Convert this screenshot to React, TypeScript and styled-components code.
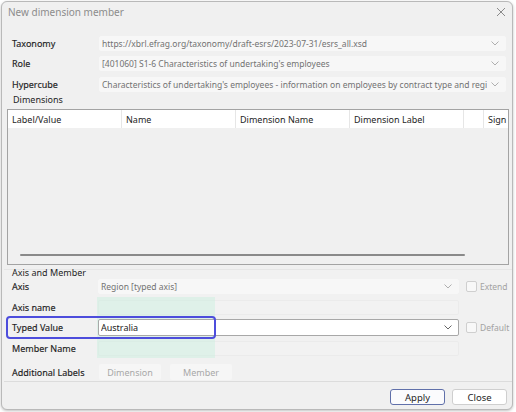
import React from 'react';
import styled, { createGlobalStyle } from 'styled-components';

const GlobalStyle = createGlobalStyle`
  html, body {
    margin: 0;
    padding: 0;
    background: #ffffff;
    font-family: "Noto Sans", "Open Sans", sans-serif;
  }
`;

const Page = styled.div`
  width: 516px;
  height: 412px;
  padding: 1px;
  box-sizing: border-box;
`;

const Window = styled.div`
  width: 512px;
  height: 409px;
  box-sizing: border-box;
  border: 1px solid #b9b9b9;
  border-radius: 6px;
  background: #f0f0f0;
  box-shadow: 0 1px 3px rgba(0, 0, 0, 0.25);
  display: flex;
  flex-direction: column;
  overflow: hidden;
`;

const TitleBar = styled.div`
  height: 20px;
  display: flex;
  align-items: center;
  justify-content: space-between;
  padding: 0 6px 0 6px;
  flex-shrink: 0;
`;

const Title = styled.span`
  font-size: 10px;
  color: #8c8c8c;
`;

const CloseX = styled.svg`
  width: 10px;
  height: 10px;
`;

const Body = styled.div`
  display: flex;
  flex-direction: column;
  padding: 14px 6px 0 10px;
`;

const Row = styled.div<{ $gap?: number; $height?: number }>`
  display: flex;
  align-items: center;
  height: ${(p) => p.$height ?? 15}px;
  margin-bottom: ${(p) => p.$gap ?? 5}px;
`;

const Label = styled.div<{ $width?: number }>`
  width: ${(p) => p.$width ?? 87}px;
  flex-shrink: 0;
  font-size: 9px;
  color: #1e1e1e;
  white-space: nowrap;
  -webkit-text-stroke: 0.15px #1e1e1e;
`;

const ComboField = styled.div<{ $white?: boolean; $faint?: boolean }>`
  position: relative;
  z-index: ${(p) => (p.$white ? 2 : 0)};
  flex: 1;
  height: 100%;
  box-sizing: border-box;
  display: flex;
  align-items: center;
  padding: 0 6px 0 2px;
  background: ${(p) => (p.$white ? '#ffffff' : p.$faint ? '#f2f2f2' : '#f7f7f7')};
  border: 1px solid ${(p) => (p.$white ? '#a8a8a8' : p.$faint ? '#ebebeb' : '#f7f7f7')};
  border-radius: 2px;
  font-size: ${(p) => (p.$white ? 9 : 8.5)}px;
  color: ${(p) => (p.$white ? '#1a1a1a' : '#727272')};
  white-space: nowrap;
  overflow: hidden;
  min-width: 0;
`;

const FieldText = styled.span`
  flex: 1;
  overflow: hidden;
`;

const Chevron = styled.svg`
  width: 8px;
  height: 5px;
  flex-shrink: 0;
  margin-left: 4px;
`;

const GroupTitle = styled.div`
  font-size: 9px;
  color: #1e1e1e;
  line-height: 10px;
  height: 14px;
  margin-left: 1px;
`;

const Table = styled.div`
  margin: 0 -3px 0 -5px;
  height: 154px;
  border: 1px solid #a3a3a3;
  background: #f0f0f0;
  display: flex;
  flex-direction: column;
`;

const HeaderRow = styled.div`
  display: flex;
  height: 18px;
  background: #ffffff;
  flex-shrink: 0;
`;

const HeaderCell = styled.div<{ $width?: number }>`
  width: ${(p) => (p.$width ? `${p.$width}px` : 'auto')};
  flex: ${(p) => (p.$width ? 'none' : '1')};
  box-sizing: border-box;
  border-right: 1px solid #e6e6e6;
  padding-left: 4px;
  font-size: 9px;
  color: #1e1e1e;
  display: flex;
  align-items: center;
  white-space: nowrap;
  overflow: hidden;
  &:last-child {
    border-right: none;
  }
`;

const TableBody = styled.div`
  flex: 1;
  display: flex;
  flex-direction: column;
  justify-content: flex-end;
  padding: 0 0 8px 12px;
`;

const ScrollBar = styled.div`
  width: 445px;
  height: 2px;
  background: #8a8a8a;
  border-radius: 1px;
`;

const AxisGroup = styled.div`
  position: relative;
  margin: 4px -6px 0 -8px;
  padding: 0 6px 0 8px;
  border-top: 1px solid #e6e6e6;
  border-bottom: 1px solid #dcdcdc;
  background: #f1f1f1;
  height: 113px;
  box-sizing: border-box;
`;

const AxisTitle = styled.div`
  font-size: 9px;
  color: #1e1e1e;
  line-height: 6px;
  height: 9px;
`;

const FieldWithSide = styled.div`
  flex: 1;
  display: flex;
  align-items: center;
  height: 100%;
  min-width: 0;
`;

const SideSlot = styled.div`
  width: 47px;
  flex-shrink: 0;
  display: flex;
  align-items: center;
  padding-left: 7px;
  gap: 3px;
  box-sizing: border-box;
`;

const Check = styled.span`
  width: 9px;
  height: 9px;
  border: 1px solid #cfcfcf;
  border-radius: 2px;
  background: #f8f8f8;
  flex-shrink: 0;
`;

const SideText = styled.span`
  font-size: 8.5px;
  color: #a2a2a2;
  white-space: nowrap;
`;

const SmallButton = styled.div`
  width: 62px;
  height: 16px;
  display: flex;
  align-items: center;
  justify-content: center;
  background: #f6f6f6;
  border-radius: 2px;
  font-size: 9px;
  color: #a8a8a8;
  margin-right: 9px;
`;

const MintTint = styled.div`
  position: absolute;
  z-index: 1;
  left: 93px;
  top: 27px;
  width: 118px;
  height: 61px;
  background: rgba(200, 240, 222, 0.45);
  pointer-events: none;
`;

const Highlight = styled.div`
  position: absolute;
  z-index: 3;
  left: 2px;
  top: 46px;
  width: 210px;
  height: 23px;
  box-sizing: border-box;
  border: 2px solid #4d4ddc;
  border-radius: 4px;
  pointer-events: none;
`;

const Footer = styled.div`
  display: flex;
  justify-content: flex-end;
  gap: 7px;
  padding: 7px 5px 0 0;
`;

const DialogButton = styled.div<{ $primary?: boolean }>`
  width: 55px;
  height: 16px;
  box-sizing: border-box;
  display: flex;
  align-items: center;
  justify-content: center;
  border: 1px solid ${(p) => (p.$primary ? '#6070aa' : '#cfcfcf')};
  background: ${(p) => (p.$primary ? '#fbfbfd' : '#ffffff')};
  border-radius: 3px;
  font-size: 9.5px;
  color: #1e1e1e;
`;

const ChevronIcon = ({ dark }: { dark?: boolean }) => (
  <Chevron viewBox="0 0 8 5">
    <path
      d="M0.5 0.5 L4 4 L7.5 0.5"
      fill="none"
      stroke={dark ? '#555555' : '#a6a6a6'}
      strokeWidth="0.9"
    />
  </Chevron>
);

const columns = [
  { title: 'Label/Value', width: 114 },
  { title: 'Name', width: 114 },
  { title: 'Dimension Name', width: 114 },
  { title: 'Dimension Label', width: 114 },
  { title: '', width: 20 },
  { title: 'Sign' },
];

export default function App() {
  return (
    <>
      <GlobalStyle />
      <Page>
        <Window>
          <TitleBar>
            <Title>New dimension member</Title>
            <CloseX viewBox="0 0 10 10">
              <path d="M1 1 L9 9 M9 1 L1 9" stroke="#8a8a8a" strokeWidth="1" />
            </CloseX>
          </TitleBar>
          <Body>
            <Row $gap={5}>
              <Label>Taxonomy</Label>
              <ComboField>
                <FieldText>https://xbrl.efrag.org/taxonomy/draft-esrs/2023-07-31/esrs_all.xsd</FieldText>
                <ChevronIcon />
              </ComboField>
            </Row>
            <Row $gap={6}>
              <Label>Role</Label>
              <ComboField>
                <FieldText>[401060] S1-6 Characteristics of undertaking's employees</FieldText>
                <ChevronIcon />
              </ComboField>
            </Row>
            <Row $gap={3}>
              <Label>Hypercube</Label>
              <ComboField>
                <FieldText>
                  Characteristics of undertaking's employees - information on employees by contract type and regi
                </FieldText>
                <ChevronIcon />
              </ComboField>
            </Row>
            <GroupTitle>Dimensions</GroupTitle>
            <Table>
              <HeaderRow>
                {columns.map((c, i) => (
                  <HeaderCell key={i} $width={c.width}>
                    {c.title}
                  </HeaderCell>
                ))}
              </HeaderRow>
              <TableBody>
                <ScrollBar />
              </TableBody>
            </Table>
            <AxisGroup>
              <AxisTitle>Axis and Member</AxisTitle>
              <Row $gap={6}>
                <Label $width={86}>Axis</Label>
                <FieldWithSide>
                  <ComboField>
                    <FieldText>Region [typed axis]</FieldText>
                    <ChevronIcon />
                  </ComboField>
                  <SideSlot>
                    <Check />
                    <SideText>Extend</SideText>
                  </SideSlot>
                </FieldWithSide>
              </Row>
              <Row $gap={4}>
                <Label $width={86}>Axis name</Label>
                <FieldWithSide>
                  <ComboField $faint />
                  <SideSlot />
                </FieldWithSide>
              </Row>
              <Row $gap={5} $height={17}>
                <Label $width={86}>Typed Value</Label>
                <FieldWithSide>
                  <ComboField $white>
                    <FieldText>Australia</FieldText>
                    <ChevronIcon dark />
                  </ComboField>
                  <SideSlot>
                    <Check />
                    <SideText>Default</SideText>
                  </SideSlot>
                </FieldWithSide>
              </Row>
              <Row $gap={8}>
                <Label $width={86}>Member Name</Label>
                <FieldWithSide>
                  <ComboField $faint />
                  <SideSlot />
                </FieldWithSide>
              </Row>
              <Row $gap={0} $height={16}>
                <Label $width={87}>Additional Labels</Label>
                <SmallButton>Dimension</SmallButton>
                <SmallButton>Member</SmallButton>
              </Row>
              <MintTint />
              <Highlight />
            </AxisGroup>
          </Body>
          <Footer>
            <DialogButton $primary>Apply</DialogButton>
            <DialogButton>Close</DialogButton>
          </Footer>
        </Window>
      </Page>
    </>
  );
}
